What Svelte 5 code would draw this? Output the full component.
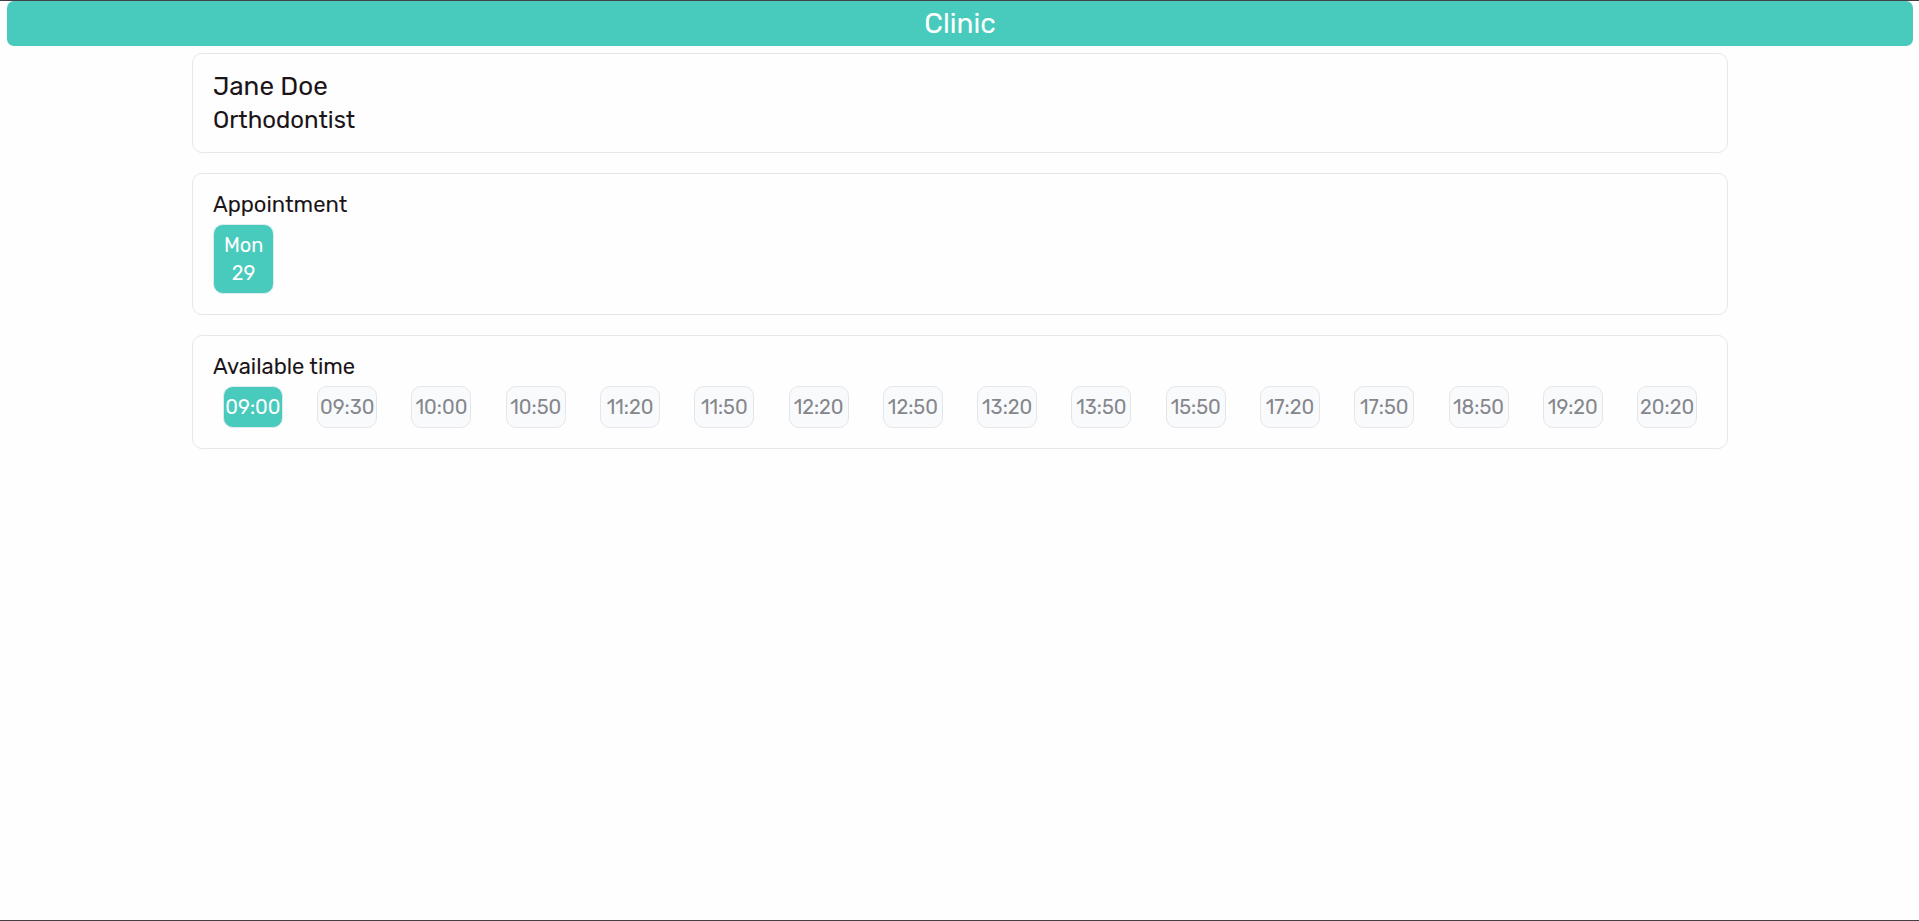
<script>
  const days = [{ name: 'Mon', date: 29 }];
  const times = [
    '09:00', '09:30', '10:00', '10:50', '11:20', '11:50', '12:20', '12:50',
    '13:20', '13:50', '15:50', '17:20', '17:50', '18:50', '19:20', '20:20'
  ];
  let day = $state(29);
  let time = $state('09:00');
</script>

<div class="page">
  <header><h1>Clinic</h1></header>
  <main>
    <section>
      <h2 class="name">Jane Doe</h2>
      <p class="role">Orthodontist</p>
    </section>
    <section>
      <h3>Appointment</h3>
      <div class="days">
        {#each days as d}
          <button class="tile" class:active={day === d.date} onclick={() => (day = d.date)}>
            <span>{d.name}</span>
            <span>{d.date}</span>
          </button>
        {/each}
      </div>
    </section>
    <section>
      <h3>Available time</h3>
      <div class="times">
        {#each times as t}
          <button class="tile" class:active={time === t} onclick={() => (time = t)}>{t}</button>
        {/each}
      </div>
    </section>
  </main>
</div>

<style>
  :global(body) {
    background: #fefefe;
  }
  .page {
    box-sizing: border-box;
    min-height: 100vh;
    border-top: 1px solid #3f4145;
    border-bottom: 1px solid #433f40;
    font-family: Rubik, Roboto, sans-serif;
    color: #1b1418;
  }
  h1, h2, h3, p {
    margin: 0;
    font-weight: 400;
  }
  header {
    margin: 0 6px 0 7px;
    border-radius: 7px;
    background: #48cabc;
    color: #fff;
    text-align: center;
  }
  h1 {
    font-size: 28px;
    line-height: 45px;
  }
  main {
    display: flex;
    flex-direction: column;
    gap: 20px;
    margin: 7px calc(10% - 1px) 0 10%;
  }
  section {
    padding: 16px 20px;
    border: 1px solid #e7e7e9;
    border-radius: 10px;
  }
  .name {
    font-size: 26px;
    line-height: 34px;
  }
  .role {
    font-size: 24px;
    line-height: 32px;
  }
  h3 {
    padding-bottom: 4px;
    font-size: 22px;
    line-height: 30px;
  }
  .days,
  .times {
    display: flex;
    padding-bottom: 4px;
  }
  .days {
    gap: 20px;
  }
  .times {
    justify-content: space-between;
    padding-left: 10px;
    padding-right: 10px;
  }
  .tile {
    display: flex;
    flex-direction: column;
    align-items: center;
    box-sizing: border-box;
    width: 60px;
    padding: 6px 0;
    border: 1px solid #e5e6eb;
    border-radius: 10px;
    background: #f9fafc;
    color: #85878c;
    font-family: inherit;
    font-size: 20px;
    line-height: 28px;
    cursor: pointer;
  }
  .days .tile {
    width: auto;
    padding: 6px 10px;
  }
  .active {
    background: #48cabc;
    border-color: #dcebec;
    color: #fff;
  }
</style>
